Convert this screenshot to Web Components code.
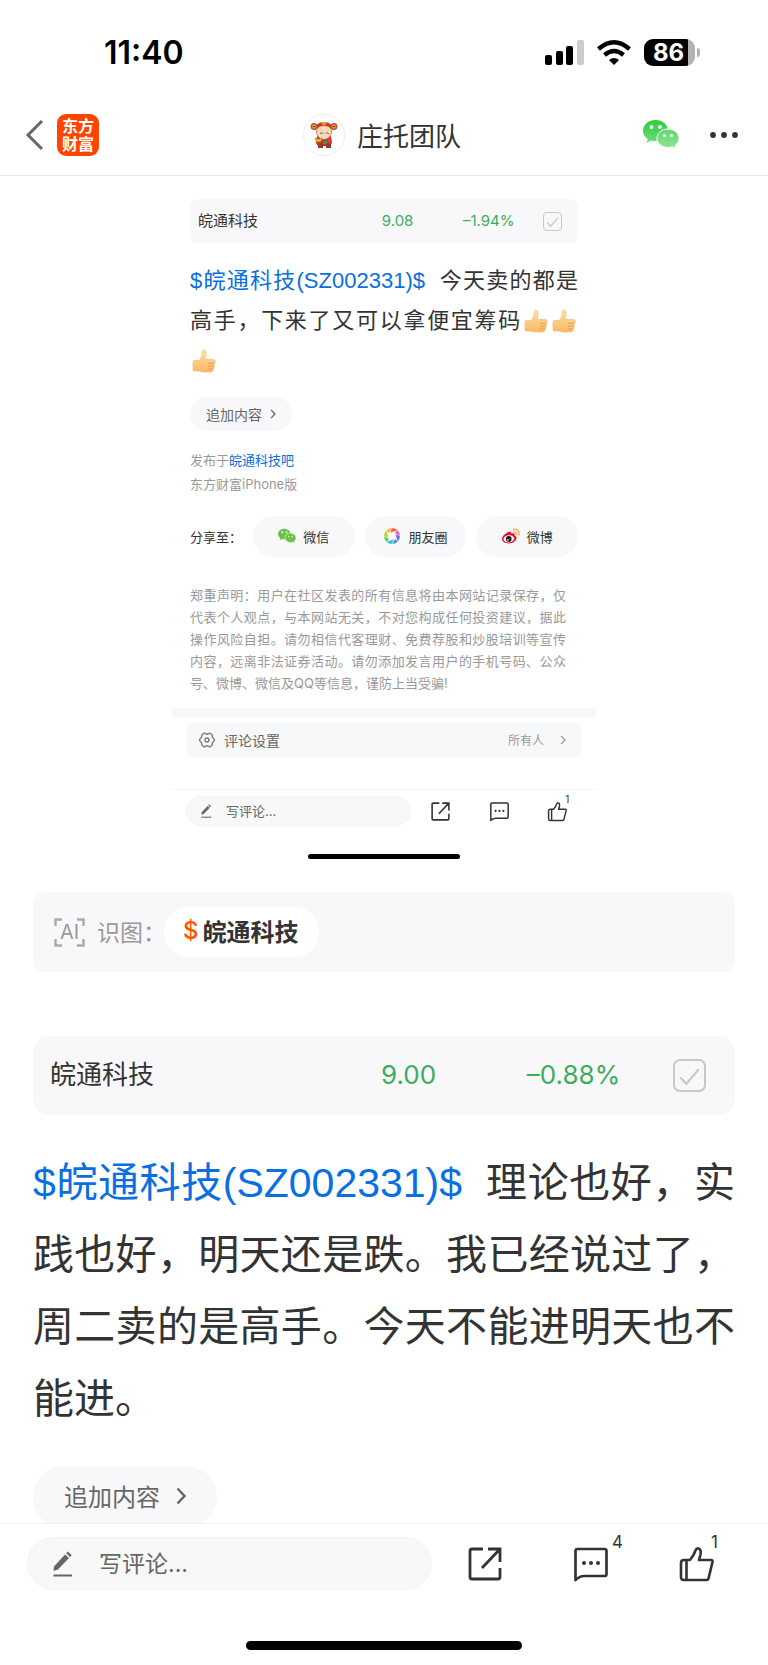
<!DOCTYPE html>
<html lang="zh-CN">
<head>
<meta charset="utf-8">
<meta name="viewport" content="width=device-width, initial-scale=1">
<title>庄托团队</title>
<style>
    html, body {
        margin: 0;
        height: 100%;
        background: #fff;
    }

    body {
        font-family: Inter, "Noto Sans CJK SC", sans-serif;
        color: #333;
    }
</style>
</head>
<body>
<post-page>
    <status-bar slot="top" time="11:40" battery="86"></status-bar>
    <nav-bar slot="top">庄托团队</nav-bar>

    <shared-post>
        <stock-quote small name="皖通科技" price="9.08" change="–1.94%"></stock-quote>
        <post-text small><a href="#SZ002331">$皖通科技(SZ002331)$</a>&nbsp; 今天卖的都是高手，下来了又可以拿便宜筹码<app-icon name="thumb"></app-icon><app-icon name="thumb"></app-icon><app-icon name="thumb"></app-icon></post-text>
        <pill-button small>追加内容</pill-button>
        <post-source forum="皖通科技吧" client="东方财富iPhone版"></post-source>
        <share-row></share-row>
        <post-notice>郑重声明：用户在社区发表的所有信息将由本网站记录保存，仅代表个人观点，与本网站无关，不对您构成任何投资建议，据此操作风险自担。请勿相信代客理财、免费荐股和炒股培训等宣传内容，远离非法证券活动。请勿添加发言用户的手机号码、公众号、微博、微信及QQ等信息，谨防上当受骗!</post-notice>
        <comment-setting slot="wide" value="所有人">评论设置</comment-setting>
        <action-bar slot="wide" small likes="1"></action-bar>
    </shared-post>

    <image-tags>皖通科技</image-tags>
    <stock-quote name="皖通科技" price="9.00" change="–0.88%"></stock-quote>
    <post-text><a href="#SZ002331">$皖通科技(SZ002331)$</a>&nbsp; 理论也好，实践也好，明天还是跌。我已经说过了，周二卖的是高手。今天不能进明天也不能进。</post-text>
    <pill-button>追加内容</pill-button>

    <action-bar slot="bottom" comments="4" likes="1"></action-bar>
</post-page>

<script>
const icons = {
    back: ['0 0 18 32', '<path d="M16 2 2 16l14 14" fill="none" stroke="#666" stroke-width="3"/>'],
    signal: ['0 0 39 25', '<rect y="15" width="7" height="10" rx="2"/><rect x="11" y="11" width="7" height="14" rx="2"/><rect x="21" y="6" width="7" height="19" rx="2"/><rect x="32" width="7" height="25" rx="2" fill="#ccc"/>'],
    wifi: ['0 0 34 25', '<path d="m17 25-5-5q5-4 10 0z"/><g fill="none" stroke="#000" stroke-width="4.4"><path d="M7.500 15q9.500-8 19 0"/><path d="M1.500 9q15.500-13.500 31 0"/></g>'],
    wechat: ['0 0 36 29', `<defs><linearGradient id="g" x2="0" y2="1"><stop stop-color="var(--wx1, #2ecc3f)"/><stop offset="1" stop-color="var(--wx2, #6fdc78)"/></linearGradient><linearGradient id="h" x2="0" y2="1"><stop stop-color="var(--wx1, #5fd868)"/><stop offset="1" stop-color="var(--wx2, #90e797)"/></linearGradient></defs>
        <path d="M12.500 0C5.500 0 0 4.700 0 10.700c0 3.400 1.800 6.300 4.700 8.300L3.600 22.800l4.500-2.400q2.200.7 4.800.7C20 21.100 25 16.400 25 10.600S19.500 0 12.500 0z" fill="url(#g)"/>
        <path d="M25 9c6.200 0 11 4.200 11 9.400 0 2.900-1.500 5.400-4 7.100l.9 3.300-3.700-2q-2 .7-4.200.7c-6.200 0-11-4-11-9.100S18.800 9 25 9z" fill="url(#h)" stroke="var(--icon-bg, #fff)" stroke-width="1"/>
        <g fill="var(--icon-bg, #fff)"><circle cx="8.500" cy="7" r="1.900"/><circle cx="17" cy="7" r="1.900"/><circle cx="21.500" cy="15.500" r="1.500"/><circle cx="28.500" cy="15.500" r="1.500"/></g>`],
    more: ['0 0 28 6', '<g fill="#333"><circle cx="3" cy="3" r="2.900"/><circle cx="14" cy="3" r="2.900"/><circle cx="25" cy="3" r="2.900"/></g>'],
    avatar: ['0 0 42 42', `<circle cx="21" cy="21" r="20.500" fill="#fff" stroke="#eee"/>
        <path d="M14 22q7 3 14 0l1 7-2 3H15l-2-3z" fill="#c62f2f"/><path d="M15 30h5v4h-5zM23 30h5v4h-5z" fill="#913b2a"/>
        <circle cx="21" cy="18" r="7.500" fill="#f5d9b8" stroke="#9a6b4b" stroke-width=".7"/>
        <path d="M12 17q0-9 9-9t9 9q-2-5-9-5t-9 5z" fill="#cc3a2c"/><path d="M17 8h8l-4 4z" fill="#d9a032"/>
        <circle cx="11" cy="12.500" r="3" fill="#df8b35" stroke="#a83726" stroke-width="1"/><circle cx="31" cy="12.500" r="3" fill="#df8b35" stroke="#a83726" stroke-width="1"/>
        <path d="m10 12.500h2m18 0h2" stroke="#8a3a14"/><path d="m17 20 2-1.500 1.500 1.500m2 0 1.500-1.500 2 1.500" fill="none" stroke="#6b4636" stroke-width=".8"/>
        <path d="M12 24q3 2.500 7 0 0 4-3.500 4T12 24z" fill="#f2c521" stroke="#a67c12" stroke-width=".5"/><path d="M20 27h4v3h-4z" fill="#3c9451"/><path d="M25 24l4 2-1 4-4-2z" fill="#df3a34"/>`],
    check: ['0 0 32 32', '<path d="m7 18 6 6 12-14" fill="none" stroke="#c8c8ca" stroke-width="2.200"/>'],
    right: ['0 0 10 18', '<path d="m1.500 1.500 7 7.500-7 7.500" fill="none" stroke="currentColor" stroke-width="2.400"/>'],
    thumb: ['0 0 24 24', `<defs><linearGradient id="t" x2="0" y2="1"><stop stop-color="#ffe3a6"/><stop offset="1" stop-color="#fbb765"/></linearGradient></defs>
        <path d="M1 13q0-1.500 1.500-1.500h4.500C9.500 9 10.500 6 10.500 2.500 10.500.5 13.500.6 14 3q.6 3-1 7.500h8.500q2 0 1.800 2 0 1.400-1 1.700.7 1.200-.3 3 .3 1.600-.7 2.800 0 3-2.300 3H10q-2-.5-3-1H2.500Q1 22 1 20.500z" fill="url(#t)" stroke="#f0b676" stroke-width=".6"/>
        <path d="M16 14.300h6M16 17.200h5.500M15.500 20h5" stroke="#e79a4d" stroke-width=".9"/>`],
    moments: ['0 0 24 24', `<g stroke="#f8f8fb" stroke-width=".3"><path d="M12 0a12 12 0 0 1 8.500 3.500L9 7z" fill="#fa5f3c"/><path d="M20.500 3.500A12 12 0 0 1 24 12l-8-5z" fill="#ea5aa0"/><path d="M24 12a12 12 0 0 1-3.500 8.500L17 9z" fill="#7962e8"/><path d="M20.500 20.500A12 12 0 0 1 12 24l5-8z" fill="#4387ed"/><path d="M12 24a12 12 0 0 1-8.500-3.500L15 17z" fill="#35c1d0"/><path d="M3.500 20.500A12 12 0 0 1 0 12l8 5z" fill="#56ca43"/><path d="M0 12a12 12 0 0 1 3.500-8.500L7 15z" fill="#b9d531"/><path d="M3.500 3.500A12 12 0 0 1 12 0L7 8z" fill="#ffb52e"/></g><circle cx="12" cy="12" r="5.200" fill="#f8f8fb"/>`],
    weibo: ['0 0 28 24', `<path d="M11 5.500c2-.8 4 0 3.300 3 4-1.400 6.200-.4 5.200 2.600 2.500.8 3.500 2.500 3 4.700-1 4.600-6.500 7.700-12.300 7.700C4.600 23.500 0 20.700 0 16.600 0 12.500 5.500 7.500 11 5.500z" fill="#e6162d"/>
        <ellipse cx="10.700" cy="16.400" rx="8.300" ry="5.500" transform="rotate(-7 10.700 16.400)" fill="#fff"/><circle cx="10.500" cy="16.500" r="4.400" fill="#111"/><circle cx="9" cy="18" r="1.400" fill="#fff"/><circle cx="11.500" cy="16" r=".7" fill="#fff"/>
        <path d="M18 5.500q4.500-.5 4.500 4.500M18 1.500q9-.5 8.500 9" fill="none" stroke="#f9a14a" stroke-width="2" stroke-linecap="round"/>`],
    gear: ['0 0 24 24', '<g fill="none" stroke="#777" stroke-width="2" stroke-linejoin="round"><path d="M8 1.500 10.500 3h3L16 1.500l4 3v3l3 3.500v2l-3 3.500v3l-4 3-2.500-1.500h-3L8 22.500l-4-3v-3L1 13v-2l3-3.500v-3z"/><circle cx="12" cy="12" r="3"/></g>'],
    pen: ['0 0 20 26', '<path d="M1 15.500 12 3.500l4 3.500L5 18.500l-4.500 1.500zM13.200 2.300 15 .5l3.700 3.700L17 6z" fill="#666"/><path d="M.5 24.500h18.500" stroke="#666" stroke-width="2"/>'],
    share: ['0 0 34 34', '<path d="M15 2H4Q2 2 2 4v26q0 2 2 2h26q2 0 2-2V21M20 2h12v13M32 2 14 21" fill="none" stroke="#333" stroke-width="2.800"/>'],
    comment: ['0 0 34 34', '<path d="M1.500 33V4q0-2 2-2h27q2 0 2 2v23q0 2-2 2H10Q6 29 1.500 33z" fill="none" stroke="#333" stroke-width="2.700" stroke-linejoin="round"/><g fill="#333"><circle cx="10" cy="16" r="2"/><circle cx="17" cy="16" r="2"/><circle cx="24" cy="16" r="2"/></g>'],
    like: ['0 0 34 34', '<path d="M10 13q3.500-4 5.500-9.500Q16.500 1 18.500 1.500q3 1 2 6L19 13h12q2 0 1.500 2l-4 16.500q-.5 1.500-2 1.500H4q-3 0-3-3V16q0-3 3-3zM6.500 13v20" fill="none" stroke="#333" stroke-width="2.600" stroke-linejoin="round"/>'],
    frame: ['0 0 31 29', '<path d="M1.500 8V1.500H8M23 1.500h6.500V8M1.500 21v6.500H8M23 27.500h6.500V21" fill="none" stroke="#aaa" stroke-width="2.400"/>']
};

// Renders html() into an open shadow root
class BaseElement extends HTMLElement {
    connectedCallback() {
        if (this.shadowRoot) return;
        const shadow = this.attachShadow({ mode: 'open' });
        const template = document.createElement('template');
        template.innerHTML = this.html();
        shadow.appendChild(template.content.cloneNode(true));
    }

    attr(name) {
        return this.getAttribute(name) || '';
    }
}

class AppIcon extends BaseElement {
    html() {
        const [box, shapes] = icons[this.attr('name')];
        return `
            <style>
                :host { display: inline-block; flex: none; width: 24px; height: 24px; }
                svg { display: block; width: 100%; height: 100%; overflow: visible; }
            </style>
            <svg viewBox="${box}" aria-hidden="true">${shapes}</svg>
        `;
    }
}

class PostPage extends BaseElement {
    html() {
        return `
            <style>
                :host { display: flex; flex-direction: column; height: 100vh; }
                main { flex: 1; min-height: 0; overflow: auto; scrollbar-width: none; }
                .body { padding: 0 33px; }
                footer { padding-bottom: 15px; }
                .home { width: 36%; height: 9px; margin: 51px auto 0; border-radius: 5px; background: #000; }
            </style>
            <header><slot name="top"></slot></header>
            <main><div class="body"><slot></slot></div></main>
            <footer><slot name="bottom"></slot><div class="home"></div></footer>
        `;
    }
}

class StatusBar extends BaseElement {
    html() {
        return `
            <style>
                :host { display: flex; align-items: center; justify-content: space-between; height: 84px; padding: 10px 68px 0 104px; color: #000; }
                time { font-size: 32px; font-weight: 600; }
                .right { display: flex; align-items: center; gap: 13px; }
                .signal { width: 39px; height: 25px; }
                .wifi { width: 34px; height: 25px; }
                .battery { display: flex; align-items: center; gap: 2px; }
                .level { box-sizing: border-box; width: 51px; height: 27px; border-radius: 9px; padding-right: 2px; background: linear-gradient(90deg, #000 86%, #b3b3b3 86%); color: #fff; font-size: 24px; font-weight: 700; line-height: 27px; text-align: center; }
                .cap { width: 3px; height: 9px; border-radius: 0 4px 4px 0; background: #b3b3b3; }
            </style>
            <time>${this.attr('time')}</time>
            <div class="right">
                <app-icon class="signal" name="signal"></app-icon>
                <app-icon class="wifi" name="wifi"></app-icon>
                <div class="battery"><div class="level">${this.attr('battery')}</div><div class="cap"></div></div>
            </div>
        `;
    }
}

class NavBar extends BaseElement {
    html() {
        return `
            <style>
                :host { display: grid; grid-template-columns: 1fr auto 1fr; align-items: center; height: 81px; padding: 0 30px 0 26px; border-bottom: 1px solid #e6e6e8; }
                a, button { display: flex; padding: 0; border: 0; background: none; }
                .left { display: flex; align-items: center; gap: 13px; }
                .back { width: 18px; height: 32px; }
                .logo { display: block; box-sizing: border-box; width: 42px; height: 42px; padding: 3px 5px; border-radius: 9px; background: #ff4400; color: #fff; font-size: 16px; font-weight: 700; line-height: 18px; text-decoration: none; }
                h1 { display: flex; align-items: center; gap: 12px; margin: 0; font-size: 26px; font-weight: 400; }
                .avatar { width: 42px; height: 42px; }
                .right { display: flex; align-items: center; justify-content: flex-end; gap: 31px; }
                .wechat { width: 36px; height: 29px; }
                .more { width: 28px; height: 6px; }
            </style>
            <div class="left">
                <button aria-label="返回"><app-icon class="back" name="back"></app-icon></button>
                <a class="logo" href="#home">东方<br>财富</a>
            </div>
            <h1><app-icon class="avatar" name="avatar"></app-icon><slot></slot></h1>
            <div class="right">
                <button aria-label="微信分享"><app-icon class="wechat" name="wechat"></app-icon></button>
                <button aria-label="更多"><app-icon class="more" name="more"></app-icon></button>
            </div>
        `;
    }
}

class SharedPost extends BaseElement {
    html() {
        return `
            <style>
                :host { display: block; max-width: 424px; margin: 0 auto 33px; padding-top: 23px; }
                .body { padding: 0 18px; }
                .strip { height: 10px; margin-top: 14px; background: #f7f8fa; }
                .home { width: 36%; height: 5px; margin: 28px auto 0; border-radius: 3px; background: #000; }
            </style>
            <div class="body"><slot></slot></div>
            <div class="strip"></div>
            <slot name="wide"></slot>
            <div class="home"></div>
        `;
    }
}

class StockQuote extends BaseElement {
    html() {
        return `
            <style>
                :host { display: grid; grid-template-columns: 42fr 23fr 24fr 9fr 2fr; align-items: center; height: 79px; margin-top: 64px; border-radius: 16px; background: #f8f8fb; font-size: 26px; }
                :host([small]) { height: 44px; margin-top: 0; border-radius: 8px; font-size: 15px; }
                .name { padding: 0 0 6px 17px; }
                .num { padding-bottom: 3px; color: #3bae5c; text-align: center; }
                :host([small]) .name { padding: 0 0 3px 8px; }
                :host([small]) .num { padding-bottom: 2px; }
                label { display: grid; justify-self: center; width: 33px; height: 33px; }
                :host([small]) label { width: 19px; height: 19px; }
                input, app-icon { grid-area: 1 / 1; box-sizing: border-box; width: 100%; height: 100%; margin: 0; }
                input { appearance: none; border: 2px solid #c8c8ca; border-radius: 7px; }
                :host([small]) input { border-width: 1px; border-radius: 4px; }
                app-icon { pointer-events: none; }
            </style>
            <span class="name">${this.attr('name')}</span>
            <span class="num">${this.attr('price')}</span>
            <span class="num">${this.attr('change')}</span>
            <label><input type="checkbox" checked aria-label="自选"><app-icon name="check"></app-icon></label>
        `;
    }
}

class PostText extends BaseElement {
    html() {
        return `
            <style>
                :host { display: block; margin-top: 32px; font-family: "Liberation Sans", "Noto Sans CJK SC", sans-serif; font-size: 41px; line-height: 72px; text-align: justify; }
                :host([small]) { margin-top: 18px; font-size: 22px; line-height: 40px; }
                ::slotted(a) { color: #0a6fe0; text-decoration: none; }
                ::slotted(app-icon) { margin: 0 2px; vertical-align: -5px; }
            </style>
            <slot></slot>
        `;
    }
}

class PillButton extends BaseElement {
    html() {
        return `
            <style>
                :host { display: flex; margin-top: 31px; }
                :host([small]) { margin-top: 16px; }
                button { display: flex; align-items: center; gap: 16px; height: 62px; padding: 0 31px 3px; border: 0; border-radius: 31px; background: #f8f8fb; color: #666; font: inherit; font-size: 24px; }
                app-icon { width: 10px; height: 18px; }
                :host([small]) button { gap: 8px; height: 34px; padding: 0 16px 1px; font-size: 14px; }
                :host([small]) app-icon { width: 6px; height: 10px; }
            </style>
            <button><slot></slot><app-icon name="right"></app-icon></button>
        `;
    }
}

class PostSource extends BaseElement {
    html() {
        return `
            <style>
                :host { display: block; margin-top: 17px; color: #999; font-size: 13px; line-height: 24px; }
                a { color: #0a6fe0; text-decoration: none; }
            </style>
            <div>发布于<a href="#forum">${this.attr('forum')}</a></div>
            <div>${this.attr('client')}</div>
        `;
    }
}

class ShareRow extends BaseElement {
    html() {
        return `
            <style>
                :host { display: grid; grid-template-columns: minmax(0, 53fr) repeat(3, minmax(0, 102fr)); align-items: center; gap: 10px; margin-top: 20px; font-size: 13px; --icon-bg: #f8f8fb; --wx1: #6bc344; --wx2: #6bc344; }
                .label { padding-bottom: 1px; white-space: nowrap; }
                button { display: flex; align-items: center; justify-content: center; gap: 7px; height: 41px; padding: 0 0 1px; border: 0; border-radius: 21px; background: #f8f8fb; color: #333; font: inherit; }
                app-icon { width: 18px; height: 16px; }
            </style>
            <span class="label">分享至：</span>
            <button><app-icon name="wechat"></app-icon>微信</button>
            <button><app-icon name="moments"></app-icon>朋友圈</button>
            <button><app-icon name="weibo"></app-icon>微博</button>
        `;
    }
}

class PostNotice extends BaseElement {
    html() {
        return `
            <style>
                :host { display: block; margin-top: 27px; padding-right: 12px; color: #999; font-size: 13px; line-height: 22px; text-align: justify; }
            </style>
            <slot></slot>
        `;
    }
}

class CommentSetting extends BaseElement {
    html() {
        return `
            <style>
                :host { display: block; margin: 5px 14px 32px; }
                button { display: flex; align-items: center; width: 100%; height: 34px; padding: 0 16px 1px 13px; border: 0; border-radius: 6px; background: #f7f8fa; color: #666; font: inherit; font-size: 14px; }
                .gear { width: 16px; height: 16px; margin-right: 9px; }
                .value { margin-left: auto; margin-right: 16px; color: #999; font-size: 12px; }
                .arrow { width: 6px; height: 10px; color: #999; }
            </style>
            <button>
                <app-icon class="gear" name="gear"></app-icon><slot></slot>
                <span class="value">${this.attr('value')}</span>
                <app-icon class="arrow" name="right"></app-icon>
            </button>
        `;
    }
}

class ImageTags extends BaseElement {
    html() {
        return `
            <style>
                :host { display: flex; align-items: center; height: 80px; padding-left: 21px; border-radius: 12px; background: #f8f8fb; color: #999; font-size: 23px; }
                .ai { display: grid; place-items: center; margin-right: 12px; }
                .ai app-icon, .ai span { grid-area: 1 / 1; }
                .ai app-icon { width: 31px; height: 29px; }
                .ai span { font-size: 20px; line-height: 29px; }
                .label { width: 67px; padding-bottom: 3px; white-space: nowrap; }
                a { display: flex; align-items: center; gap: 4px; box-sizing: border-box; height: 50px; padding: 0 20px 3px 19px; border-radius: 25px; background: #fff; color: #333; font-size: 24px; font-weight: 700; text-decoration: none; }
                b { color: #ff5500; font-weight: 500; }
            </style>
            <span class="ai"><app-icon name="frame"></app-icon><span>AI</span></span>
            <span class="label">识图：</span>
            <a href="#SZ002331"><b>$</b><slot></slot></a>
        `;
    }
}

class ActionBar extends BaseElement {
    html() {
        return `
            <style>
                :host { display: grid; grid-template-columns: minmax(0, 405fr) minmax(0, 318fr); padding: 13px 18px 0 27px; border-top: 1px solid #f2f2f2; background: #fff; }
                label { display: flex; align-items: center; gap: 26px; box-sizing: border-box; height: 53px; padding-left: 25px; border: 1px solid #f4f4f4; border-radius: 27px; background: #f8f8f8; }
                .pen { width: 20px; height: 26px; }
                input { flex: 1; min-width: 0; padding: 0; border: 0; outline: 0; background: none; font: inherit; font-size: 23px; color: #666; }
                input::placeholder { color: #666; opacity: 1; }
                .actions { display: flex; }
                button { flex: 1; display: grid; place-items: center; padding: 0; border: 0; background: none; color: #333; font: inherit; }
                .icon { position: relative; display: block; }
                .icon app-icon { display: block; width: 34px; height: 34px; }
                .count { position: absolute; left: 38px; bottom: 29px; font-size: 17px; line-height: 20px; }
                .likes { left: 31px; }

                :host([small]) { grid-template-columns: minmax(0, 225fr) minmax(0, 176fr); padding: 6px 9px 0 14px; }
                :host([small]) label { gap: 14px; height: 30px; padding-left: 14px; }
                :host([small]) .pen { width: 11px; height: 14px; }
                :host([small]) input { font-size: 13px; }
                :host([small]) .icon app-icon { width: 19px; height: 19px; }
                :host([small]) .count { left: 17px; bottom: 16px; font-size: 10px; line-height: 12px; }
            </style>
            <label><app-icon class="pen" name="pen"></app-icon><input type="text" placeholder="写评论..." aria-label="写评论"></label>
            <div class="actions">
                <button aria-label="分享"><span class="icon"><app-icon name="share"></app-icon></span></button>
                <button aria-label="评论"><span class="icon"><app-icon name="comment"></app-icon><span class="count">${this.attr('comments')}</span></span></button>
                <button aria-label="点赞"><span class="icon"><app-icon name="like"></app-icon><span class="count likes">${this.attr('likes')}</span></span></button>
            </div>
        `;
    }
}

customElements.define('app-icon', AppIcon);
customElements.define('post-page', PostPage);
customElements.define('status-bar', StatusBar);
customElements.define('nav-bar', NavBar);
customElements.define('shared-post', SharedPost);
customElements.define('stock-quote', StockQuote);
customElements.define('post-text', PostText);
customElements.define('pill-button', PillButton);
customElements.define('post-source', PostSource);
customElements.define('share-row', ShareRow);
customElements.define('post-notice', PostNotice);
customElements.define('comment-setting', CommentSetting);
customElements.define('image-tags', ImageTags);
customElements.define('action-bar', ActionBar);
</script>
</body>
</html>
